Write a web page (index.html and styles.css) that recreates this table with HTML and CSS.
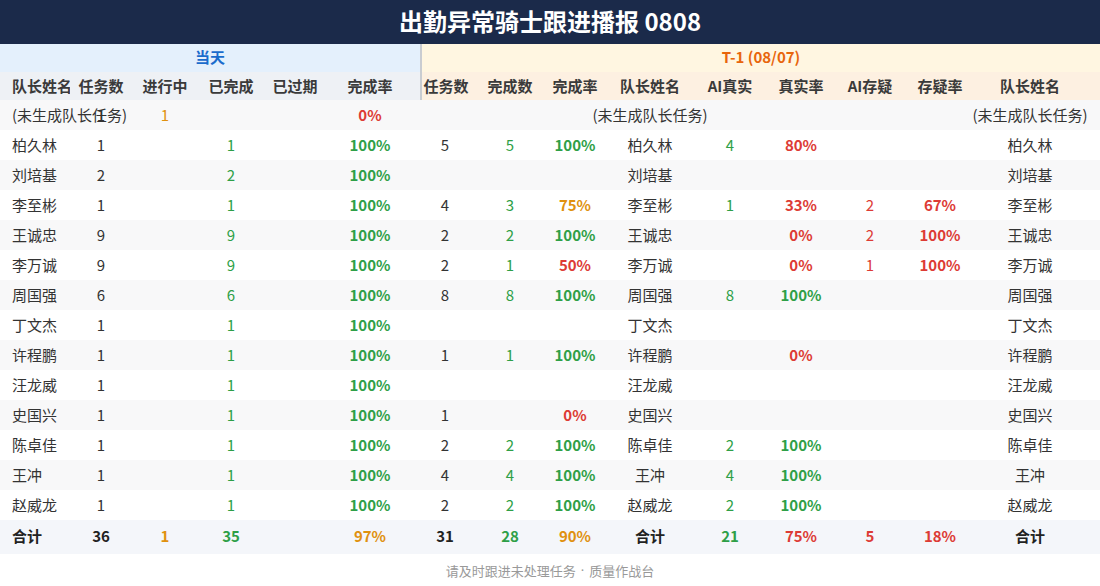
FILE: index.html
```html
<!DOCTYPE html>
<html lang="zh-CN">
<head>
<meta charset="utf-8">
<title>出勤异常骑士跟进播报 0808</title>
<link rel="stylesheet" href="styles.css">
</head>
<body>
<div class="page">
  <header class="title-bar">出勤异常骑士跟进播报 0808</header>
  <div class="table">
    <div class="row group-row">
      <div class="group today">当天</div>
      <div class="group prev">T-1 (08/07)</div>
    </div>
    <div class="row head-row">
      <div class="c name h-l">队长姓名</div>
      <div class="c h-l">任务数</div>
      <div class="c h-l">进行中</div>
      <div class="c h-l">已完成</div>
      <div class="c h-l">已过期</div>
      <div class="c rate6 h-l">完成率</div>
      <div class="c split h-r">任务数</div>
      <div class="c h-r">完成数</div>
      <div class="c h-r">完成率</div>
      <div class="c h-r">队长姓名</div>
      <div class="c h-r">AI真实</div>
      <div class="c h-r">真实率</div>
      <div class="c h-r">AI存疑</div>
      <div class="c h-r">存疑率</div>
      <div class="c last h-r">队长姓名</div>
    </div>

    <div class="row alt">
      <div class="c name">(未生成队长任务)</div><div class="c">1</div><div class="c orange">1</div><div class="c"></div><div class="c"></div><div class="c rate6 b red">0%</div>
      <div class="c"></div><div class="c"></div><div class="c"></div><div class="c">(未生成队长任务)</div><div class="c"></div><div class="c"></div><div class="c"></div><div class="c"></div><div class="c last">(未生成队长任务)</div>
    </div>
    <div class="row">
      <div class="c name">柏久林</div><div class="c">1</div><div class="c"></div><div class="c green">1</div><div class="c"></div><div class="c rate6 b green">100%</div>
      <div class="c">5</div><div class="c green">5</div><div class="c b green">100%</div><div class="c">柏久林</div><div class="c green">4</div><div class="c b red">80%</div><div class="c"></div><div class="c"></div><div class="c last">柏久林</div>
    </div>
    <div class="row alt">
      <div class="c name">刘培基</div><div class="c">2</div><div class="c"></div><div class="c green">2</div><div class="c"></div><div class="c rate6 b green">100%</div>
      <div class="c"></div><div class="c"></div><div class="c"></div><div class="c">刘培基</div><div class="c"></div><div class="c"></div><div class="c"></div><div class="c"></div><div class="c last">刘培基</div>
    </div>
    <div class="row">
      <div class="c name">李至彬</div><div class="c">1</div><div class="c"></div><div class="c green">1</div><div class="c"></div><div class="c rate6 b green">100%</div>
      <div class="c">4</div><div class="c green">3</div><div class="c b orange">75%</div><div class="c">李至彬</div><div class="c green">1</div><div class="c b red">33%</div><div class="c red">2</div><div class="c b red">67%</div><div class="c last">李至彬</div>
    </div>
    <div class="row alt">
      <div class="c name">王诚忠</div><div class="c">9</div><div class="c"></div><div class="c green">9</div><div class="c"></div><div class="c rate6 b green">100%</div>
      <div class="c">2</div><div class="c green">2</div><div class="c b green">100%</div><div class="c">王诚忠</div><div class="c"></div><div class="c b red">0%</div><div class="c red">2</div><div class="c b red">100%</div><div class="c last">王诚忠</div>
    </div>
    <div class="row">
      <div class="c name">李万诚</div><div class="c">9</div><div class="c"></div><div class="c green">9</div><div class="c"></div><div class="c rate6 b green">100%</div>
      <div class="c">2</div><div class="c green">1</div><div class="c b red">50%</div><div class="c">李万诚</div><div class="c"></div><div class="c b red">0%</div><div class="c red">1</div><div class="c b red">100%</div><div class="c last">李万诚</div>
    </div>
    <div class="row alt">
      <div class="c name">周国强</div><div class="c">6</div><div class="c"></div><div class="c green">6</div><div class="c"></div><div class="c rate6 b green">100%</div>
      <div class="c">8</div><div class="c green">8</div><div class="c b green">100%</div><div class="c">周国强</div><div class="c green">8</div><div class="c b green">100%</div><div class="c"></div><div class="c"></div><div class="c last">周国强</div>
    </div>
    <div class="row">
      <div class="c name">丁文杰</div><div class="c">1</div><div class="c"></div><div class="c green">1</div><div class="c"></div><div class="c rate6 b green">100%</div>
      <div class="c"></div><div class="c"></div><div class="c"></div><div class="c">丁文杰</div><div class="c"></div><div class="c"></div><div class="c"></div><div class="c"></div><div class="c last">丁文杰</div>
    </div>
    <div class="row alt">
      <div class="c name">许程鹏</div><div class="c">1</div><div class="c"></div><div class="c green">1</div><div class="c"></div><div class="c rate6 b green">100%</div>
      <div class="c">1</div><div class="c green">1</div><div class="c b green">100%</div><div class="c">许程鹏</div><div class="c"></div><div class="c b red">0%</div><div class="c"></div><div class="c"></div><div class="c last">许程鹏</div>
    </div>
    <div class="row">
      <div class="c name">汪龙威</div><div class="c">1</div><div class="c"></div><div class="c green">1</div><div class="c"></div><div class="c rate6 b green">100%</div>
      <div class="c"></div><div class="c"></div><div class="c"></div><div class="c">汪龙威</div><div class="c"></div><div class="c"></div><div class="c"></div><div class="c"></div><div class="c last">汪龙威</div>
    </div>
    <div class="row alt">
      <div class="c name">史国兴</div><div class="c">1</div><div class="c"></div><div class="c green">1</div><div class="c"></div><div class="c rate6 b green">100%</div>
      <div class="c">1</div><div class="c"></div><div class="c b red">0%</div><div class="c">史国兴</div><div class="c"></div><div class="c"></div><div class="c"></div><div class="c"></div><div class="c last">史国兴</div>
    </div>
    <div class="row">
      <div class="c name">陈卓佳</div><div class="c">1</div><div class="c"></div><div class="c green">1</div><div class="c"></div><div class="c rate6 b green">100%</div>
      <div class="c">2</div><div class="c green">2</div><div class="c b green">100%</div><div class="c">陈卓佳</div><div class="c green">2</div><div class="c b green">100%</div><div class="c"></div><div class="c"></div><div class="c last">陈卓佳</div>
    </div>
    <div class="row alt">
      <div class="c name">王冲</div><div class="c">1</div><div class="c"></div><div class="c green">1</div><div class="c"></div><div class="c rate6 b green">100%</div>
      <div class="c">4</div><div class="c green">4</div><div class="c b green">100%</div><div class="c">王冲</div><div class="c green">4</div><div class="c b green">100%</div><div class="c"></div><div class="c"></div><div class="c last">王冲</div>
    </div>
    <div class="row">
      <div class="c name">赵威龙</div><div class="c">1</div><div class="c"></div><div class="c green">1</div><div class="c"></div><div class="c rate6 b green">100%</div>
      <div class="c">2</div><div class="c green">2</div><div class="c b green">100%</div><div class="c">赵威龙</div><div class="c green">2</div><div class="c b green">100%</div><div class="c"></div><div class="c"></div><div class="c last">赵威龙</div>
    </div>

    <div class="row total">
      <div class="c name">合计</div><div class="c">36</div><div class="c orange">1</div><div class="c green">35</div><div class="c"></div><div class="c rate6 orange">97%</div>
      <div class="c">31</div><div class="c green">28</div><div class="c orange">90%</div><div class="c">合计</div><div class="c green">21</div><div class="c red">75%</div><div class="c red">5</div><div class="c red">18%</div><div class="c last">合计</div>
    </div>
  </div>
  <footer class="footer">请及时跟进未处理任务<span class="dot">·</span>质量作战台</footer>
</div>
</body>
</html>
```

FILE: styles.css
```css
* { box-sizing: border-box; }

html, body {
  margin: 0;
  padding: 0;
  background: #ffffff;
}

body {
  font-family: "Noto Sans CJK SC", "Noto Sans", sans-serif;
  color: #333333;
  width: 1100px;
}

.page {
  display: flex;
  flex-direction: column;
}

.title-bar {
  height: 44px;
  background: #1b2a4a;
  color: #ffffff;
  font-size: 24px;
  font-weight: 700;
  display: flex;
  align-items: center;
  justify-content: center;
  line-height: 1;
  padding-bottom: 2px;
}

.table {
  display: flex;
  flex-direction: column;
}

.row {
  display: grid;
  grid-template-columns: 70px 62px 66px 66px 62px 94px 50px 80px 50px 100px 60px 82px 56px 84px 118px;
  height: 30px;
  background: #ffffff;
  font-size: 15px;
}

.row.alt { background: #f8f8f9; }

.c {
  display: flex;
  align-items: center;
  justify-content: center;
  white-space: nowrap;
  min-width: 0;
  line-height: 1;
  padding-bottom: 2px;
}

.c.name {
  justify-content: flex-start;
  padding-left: 12px;
}

.c.rate6 { padding-right: 6px; }
.c.last { padding-right: 22px; }

.group-row {
  height: 28px;
  grid-template-columns: 420px 680px;
}

.group {
  display: flex;
  align-items: center;
  justify-content: center;
  font-weight: 700;
  font-size: 15px;
  line-height: 1;
  padding-bottom: 3px;
}

.group.today {
  background: #e4f0fc;
  color: #1a6ccc;
}

.group.prev {
  background: #fff6e1;
  color: #e8650c;
  border-left: 2px solid #c9ccd1;
}

.head-row {
  height: 28px;
  font-weight: 700;
  color: #3a3a3a;
}

.h-l { background: #eef1f5; }
.h-r { background: #fdf0e1; }
.c.split { border-left: 2px solid #c9ccd1; }

.green { color: #2e9f47; }
.red { color: #dd3b35; }
.orange { color: #e0910f; }
.b { font-weight: 700; }

.row.total {
  height: 34px;
  background: #f4f6fa;
  font-weight: 700;
  color: #222222;
}

.row.total .c { padding-bottom: 3px; }
.row.total .c.rate6 { padding-right: 6px; }
.row.total .c.last { padding-right: 22px; }

.footer {
  height: 32px;
  display: flex;
  align-items: center;
  justify-content: center;
  font-size: 13px;
  line-height: 1;
  color: #999999;
}

.dot {
  font-family: "Noto Sans", sans-serif;
  margin: 0 5px;
}
```
